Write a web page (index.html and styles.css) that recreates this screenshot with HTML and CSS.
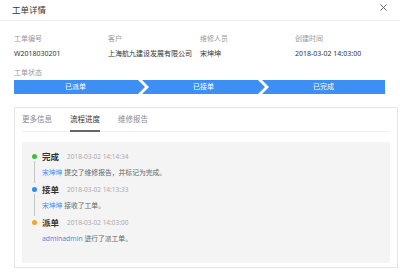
FILE: index.html
```html
<!DOCTYPE html>
<html lang="zh">
<head>
  <meta charset="UTF-8">
  <meta name="viewport" content="width=device-width, initial-scale=1.0">
  <title>工单详情</title>
  <link rel="stylesheet" href="styles.css">
</head>
<body>
  <div class="modal">
    <div class="modal-header">
      <span class="modal-title">工单详情</span>
      <svg class="close" width="7" height="7" viewBox="0 0 7 7">
        <path d="M0.5 0.5 L6.5 6.5 M6.5 0.5 L0.5 6.5" stroke="#666" stroke-width="1" fill="none"/>
      </svg>
    </div>

    <div class="info">
      <div class="info-item">
        <div class="label">工单编号</div>
        <div class="value">W2018030201</div>
      </div>
      <div class="info-item">
        <div class="label">客户</div>
        <div class="value">上海航九建设发展有限公司</div>
      </div>
      <div class="info-item">
        <div class="label">维修人员</div>
        <div class="value">宋坤坤</div>
      </div>
      <div class="info-item">
        <div class="label">创建时间</div>
        <div class="value">2018-03-02 14:03:00</div>
      </div>
    </div>

    <div class="status-label">工单状态</div>
    <div class="steps">
      <div class="step step-first">已派单</div>
      <div class="step step-mid">已接单</div>
      <div class="step step-last">已完成</div>
    </div>

    <div class="card">
      <ul class="tabs">
        <li class="tab">更多信息</li>
        <li class="tab active">流程进度</li>
        <li class="tab">维修报告</li>
      </ul>

      <div class="panel">
        <div class="tl-item">
          <div class="rail"><span class="dot green"></span><span class="line"></span></div>
          <div class="tl-body">
            <div class="tl-head"><span class="tl-title">完成</span><span class="tl-time">2018-03-02 14:14:34</span></div>
            <div class="tl-desc"><span class="who">宋坤坤</span> 提交了维修报告，并标记为完成。</div>
          </div>
        </div>
        <div class="tl-item">
          <div class="rail"><span class="dot blue"></span><span class="line"></span></div>
          <div class="tl-body">
            <div class="tl-head"><span class="tl-title">接单</span><span class="tl-time">2018-03-02 14:13:33</span></div>
            <div class="tl-desc"><span class="who">宋坤坤</span> 接收了工单。</div>
          </div>
        </div>
        <div class="tl-item last">
          <div class="rail"><span class="dot orange"></span><span class="line"></span></div>
          <div class="tl-body">
            <div class="tl-head"><span class="tl-title">派单</span><span class="tl-time">2018-03-02 14:03:00</span></div>
            <div class="tl-desc"><span class="who">adminadmin</span> 进行了派工单。</div>
          </div>
        </div>
      </div>
    </div>
  </div>
</body>
</html>
```

FILE: styles.css
```css
* {margin:0; padding:0; box-sizing: border-box;}
ul{list-style-type: none;}
body{
  background: #fff;
  font-family: "Noto Sans", "Noto Sans CJK SC", sans-serif;
  color: #333;
}
.modal{
  width: 400px;
  height: 272px;
}
.modal-header{
  height: 21px;
  padding: 0 13px 0 12px;
  border-bottom: 1px solid #eee;
  display: flex;
  justify-content: space-between;
  align-items: center;
}
.modal-title{
  font-size: 8.5px;
  line-height: 12px;
}
.close{
  margin-bottom: 5px;
}

/* info grid */
.info{
  margin-top: 13px;
  padding-left: 14px;
  display: grid;
  grid-template-columns: 94px 92px 95px 1fr;
}
.label{
  font-size: 7px;
  line-height: 10px;
  color: #999;
}
.value{
  margin-top: 5px;
  font-size: 7px;
  line-height: 10px;
  color: #333;
}
.status-label{
  margin: 9px 0 0 14px;
  font-size: 7px;
  line-height: 10px;
  color: #999;
}

/* steps */
.steps{
  margin: 2px 15px 0 14px;
  height: 14px;
  display: flex;
}
.step{
  flex: 1;
  background: #3d8ff3;
  color: #fff;
  font-size: 7px;
  line-height: 14px;
  text-align: center;
}
.step-first{
  clip-path: polygon(0 0, calc(100% - 7px) 0, 100% 50%, calc(100% - 7px) 100%, 0 100%);
  padding-right: 8px;
}
.step-mid{
  margin-left: -3px;
  clip-path: polygon(0 0, calc(100% - 7px) 0, 100% 50%, calc(100% - 7px) 100%, 0 100%, 7px 50%);
}
.step-last{
  margin-left: -3px;
  clip-path: polygon(0 0, 100% 0, 100% 100%, 0 100%, 7px 50%);
}

/* card */
.card{
  margin: 13px 2px 0 14px;
  border: 1px solid #e6e6e6;
  padding: 0 7px 4px;
}
.tabs{
  display: flex;
  gap: 18px;
  border-bottom: 1px solid #eee;
}
.tab{
  padding: 6px 0 7px;
  font-size: 7.5px;
  line-height: 10px;
  color: #888;
  margin-bottom: -1px;
  border-bottom: 1px solid transparent;
}
.tab.active{
  color: #333;
  border-bottom: 2px solid #666;
  padding-bottom: 6px;
}

/* timeline */
.panel{
  margin-top: 10px;
  height: 121px;
  background: #f4f4f4;
  padding-top: 8px;
}
.tl-item{
  display: flex;
}
.rail{
  width: 20px;
  display: flex;
  flex-direction: column;
  align-items: flex-start;
}
.dot{
  margin: 4px 0 0 10px;
  width: 5px;
  height: 5px;
  border-radius: 50%;
}
.dot.green{background: #3cbf3c;}
.dot.blue{background: #2d8cf0;}
.dot.orange{background: #f5a623;}
.line{
  flex: 1;
  width: 1px;
  margin: 2px 0 0 12px;
  background: #c4c4c4;
}
.tl-item.last .line{
  visibility: hidden;
}
.tl-body{
  padding-bottom: 5px;
}
.tl-head{
  display: flex;
  align-items: center;
  height: 12px;
}
.tl-title{
  font-size: 8.5px;
  font-weight: 600;
  color: #333;
}
.tl-time{
  margin-left: 8px;
  font-size: 6.5px;
  color: #aaa;
}
.tl-desc{
  margin-top: 6px;
  font-size: 6.8px;
  line-height: 10px;
  color: #666;
}
.who{
  color: #3d8ff3;
}
```
